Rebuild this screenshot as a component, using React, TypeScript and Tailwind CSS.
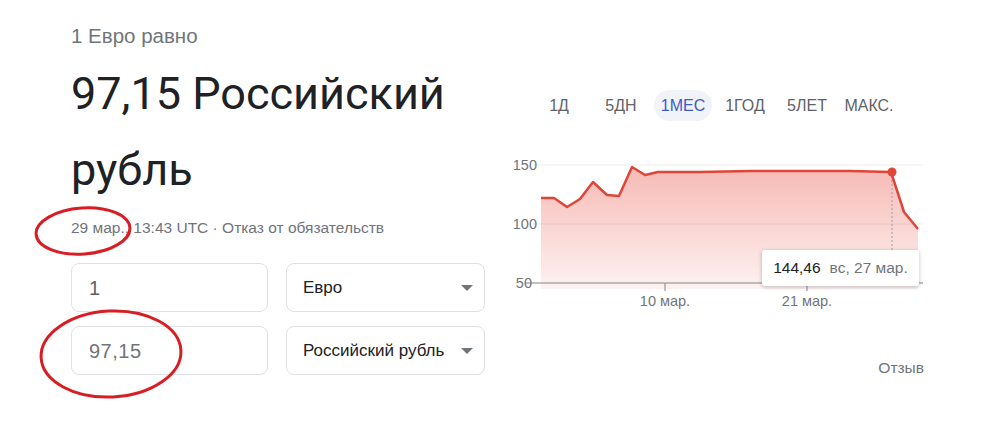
const arial = "font-['Liberation_Sans',Arial,sans-serif]";

const tabs = ["1Д", "5ДН", "1МЕС", "1ГОД", "5ЛЕТ", "МАКС."];

// chart points in page coords, shifted by the svg origin (505,150)
const pts: [number, number][] = [
  [541, 198], [554, 198], [567, 207], [580, 199], [593, 182], [607, 195], [619, 196],
  [632, 167], [645, 175], [658, 172], [700, 172], [750, 171], [850, 171], [891, 172],
  [904, 212], [918, 229],
].map(([x, y]) => [x - 505, y - 150]);

function Chart() {
  const line = pts.map(([x, y]) => `${x},${y}`).join(" ");
  const area = `${pts[0][0]},139 ${line} ${pts[pts.length - 1][0]},139`;
  return (
    <svg width="425" height="170" className={arial}>
      <defs>
        <linearGradient id="fill" x1="0" y1="0" x2="0" y2="1">
          <stop offset="0" stopColor="#e8493d" stopOpacity="0.38" />
          <stop offset="1" stopColor="#e8493d" stopOpacity="0.07" />
        </linearGradient>
      </defs>
      <line x1="28" y1="15" x2="418" y2="15" stroke="#ececec" />
      <line x1="28" y1="74" x2="418" y2="74" stroke="#ececec" />
      <polygon points={area} fill="url(#fill)" />
      <line x1="20" y1="133" x2="418" y2="133" stroke="#80868b" />
      <line x1="160" y1="133" x2="160" y2="141" stroke="#80868b" />
      <line x1="302" y1="133" x2="302" y2="141" stroke="#80868b" />
      <line x1="387" y1="26" x2="387" y2="100" stroke="#9aa0a6" strokeDasharray="2 2" />
      <polyline points={line} fill="none" stroke="#e0453a" strokeWidth="2.5" strokeLinejoin="round" />
      <circle cx="387" cy="22" r="4.5" fill="#e0453a" />
      <g fill="#70757a" fontSize="14.5">
        <text x="32" y="20" textAnchor="end">150</text>
        <text x="32" y="79" textAnchor="end">100</text>
        <text x="27" y="138" textAnchor="end">50</text>
        <text x="160" y="156" textAnchor="middle">10 мар.</text>
        <text x="302" y="156" textAnchor="middle">21 мар.</text>
      </g>
    </svg>
  );
}

function Arrow() {
  return (
    <svg width="12" height="6" viewBox="0 0 12 6">
      <path d="M0 0h12L6 6z" fill="#70757a" />
    </svg>
  );
}

export default function App() {
  return (
    <div className={`relative w-[1000px] h-[430px] bg-white flex ${arial}`}>
      <div className="w-[486px] pl-[71px] pt-[24px] shrink-0">
        <div className="text-[20.5px] leading-[24px] text-[#70757a]">1 Евро равно</div>
        <div className="mt-[8px] text-[45px] leading-[76px] text-[#202124] font-['Roboto',sans-serif]">
          97,15 Российский рубль
        </div>
        <div className="mt-[10px] text-[15.5px] leading-[20px] text-[#70757a]">
          29 мар., 13:43 UTC · Отказ от обязательств
        </div>
        <div className="mt-[25px] flex flex-col gap-[14px]">
          {[
            ["1", "Евро", "text-[#5f6368]"],
            ["97,15", "Российский рубль", "text-[#70757a] tracking-[0.5px]"],
          ].map(([v, cur, cls]) => (
            <div key={cur} className="flex gap-[18px]">
              <div className="w-[197px] h-[49px] border border-[#dfe1e5] rounded-[8px] flex items-center pl-[17px]">
                <span className={`text-[20px] ${cls}`}>{v}</span>
              </div>
              <div className="w-[199px] h-[49px] border border-[#dfe1e5] rounded-[8px] flex items-center justify-between pl-[16px] pr-[11px]">
                <span className="text-[17px] text-[#202124]">{cur}</span>
                <Arrow />
              </div>
            </div>
          ))}
        </div>
      </div>

      <div className="flex-1 pt-[90px]">
        <div className="flex pl-[42px]">
          {tabs.map((t) => (
            <div key={t} className="w-[62px] flex justify-center">
              <span
                className={
                  t === "1МЕС"
                    ? "h-[31px] px-[7px] rounded-full bg-[#f1f3f8] text-[#3c5cc9] text-[16px] leading-[31px]"
                    : "h-[31px] text-[16px] leading-[31px] text-[#5f6368]"
                }
              >
                {t}
              </span>
            </div>
          ))}
        </div>
        <div className="mt-[29px] ml-[19px]">
          <Chart />
        </div>
        <div className="w-[438px] text-right text-[15.5px] text-[#70757a] mt-[36px]">Отзыв</div>
      </div>

      <div className="absolute left-[762px] top-[250px] w-[157px] h-[36px] bg-white rounded-[3px] shadow-[0_1px_4px_rgba(0,0,0,0.25)] flex items-center justify-center gap-[9px] text-[15.5px]">
        <span className="text-[#202124]">144,46</span>
        <span className="text-[#70757a]">вс, 27 мар.</span>
      </div>

      <svg className="absolute inset-0 pointer-events-none" width="1000" height="430">
        <g fill="none" stroke="#d81e24" strokeWidth="3">
          <ellipse cx="83" cy="231" rx="47" ry="23" transform="rotate(-4 83 231)" />
          <ellipse cx="111" cy="354" rx="70" ry="43" transform="rotate(-3 111 354)" />
        </g>
      </svg>
    </div>
  );
}
